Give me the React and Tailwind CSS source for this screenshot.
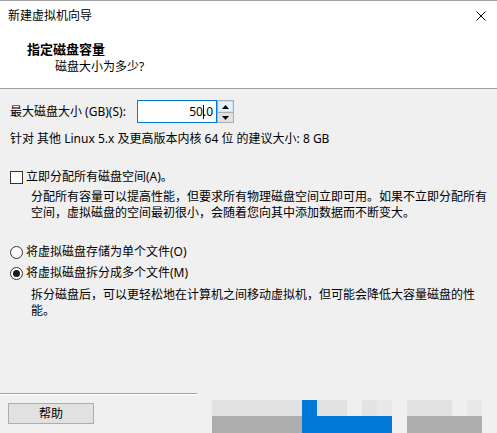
import React from "react";

// pixelated button strip in the lower right of the dialog
const mosaic = [
  { w: 90, top: "#e1e1e1", bottom: "#adadad" },
  { w: 15, top: "#0078d7", bottom: "#0078d7" },
  { w: 30, top: "#e1e1e1", bottom: "#0078d7" },
  { w: 15, top: "#efefef", bottom: "#0078d7" },
  { w: 15, top: "#e3e3e3", bottom: "#0078d7" },
  { w: 15, top: "#e8e8e8", bottom: "#0078d7" },
  { w: 15, top: "#f0f0f0", bottom: "#f0f0f0" },
  { w: 45, top: "#e1e1e1", bottom: "#adadad" },
  { w: 15, top: "#efefef", bottom: "#adadad" },
  { w: 15, top: "#e8e8e8", bottom: "#adadad" },
];

function Checkbox() {
  return <span className="block w-[13px] h-[13px] border border-[#333333] bg-white shrink-0" />;
}

function Radio({ checked }) {
  return (
    <span className="flex items-center justify-center w-[13px] h-[13px] rounded-full border border-[#333333] bg-white shrink-0">
      {checked && <span className="block w-[7px] h-[7px] rounded-full bg-[#1a1a1a]" />}
    </span>
  );
}

export default function App() {
  return (
    <div className="w-[497px] h-[433px] flex flex-col overflow-hidden bg-[#f0f0f0] text-[12px] leading-[16px] text-black font-['Noto_Sans','Noto_Sans_CJK_SC',sans-serif]">
      {/* title bar + header */}
      <div className="bg-white border-t border-[#a0a0a0]">
        <div className="h-[30px] flex items-center justify-between pl-[8px] pr-[10px]">
          <span>新建虚拟机向导</span>
          <svg width="10" height="10" viewBox="0 0 10 10" className="mr-[1px]">
            <path d="M0.5 0.5 L9.5 9.5 M9.5 0.5 L0.5 9.5" stroke="#000" strokeWidth="1" />
          </svg>
        </div>
        <div className="h-[57px] pt-[10px]">
          <div className="pl-[27px] font-bold text-[13px]">指定磁盘容量</div>
          <div className="pl-[55px] mt-[2px]">磁盘大小为多少?</div>
        </div>
      </div>
      <div className="h-px bg-[#a0a0a0]" />

      <div className="flex-1 flex flex-col">
        <div className="pl-[10px] mt-[11px] flex items-center">
          <span className="w-[127px]">最大磁盘大小 (GB)(S):</span>
          <div className="relative w-[80px] h-[23px] border border-[#0078d7] bg-white flex items-center justify-end pr-[3px]">
            <span>50.0</span>
            <span className="absolute left-[65px] top-[4px] w-px h-[14px] bg-black" />
          </div>
          <div className="w-[17px] h-[23px] border border-[#adadad] flex flex-col bg-white">
            <div className="flex-1 flex items-center justify-center bg-[#e5f1fb] border border-[#cce4f7]">
              <svg width="7" height="4" viewBox="0 0 7 4"><path d="M3.5 0 L7 4 L0 4 Z" fill="#000" /></svg>
            </div>
            <div className="flex-1 flex items-center justify-center bg-[#e1e1e1] border-t border-[#adadad]">
              <svg width="7" height="4" viewBox="0 0 7 4"><path d="M0 0 L7 0 L3.5 4 Z" fill="#000" /></svg>
            </div>
          </div>
        </div>
        <div className="pl-[10px] mt-[8px]">针对 其他 Linux 5.x 及更高版本内核 64 位 的建议大小: 8 GB</div>

        <div className="pl-[10px] mt-[22px] flex items-center gap-[3px]">
          <Checkbox />
          <span>立即分配所有磁盘空间(A)。</span>
        </div>
        <div className="pl-[31px] mt-[4px]">
          <div>分配所有容量可以提高性能，但要求所有物理磁盘空间立即可用。如果不立即分配所有</div>
          <div>空间，虚拟磁盘的空间最初很小，会随着您向其中添加数据而不断变大。</div>
        </div>

        <div className="pl-[10px] mt-[23px] flex items-center gap-[3px]">
          <Radio />
          <span>将虚拟磁盘存储为单个文件(O)</span>
        </div>
        <div className="pl-[10px] mt-[5px] flex items-center gap-[3px]">
          <Radio checked />
          <span>将虚拟磁盘拆分成多个文件(M)</span>
        </div>
        <div className="pl-[31px] mt-[6px]">
          <div>拆分磁盘后，可以更轻松地在计算机之间移动虚拟机，但可能会降低大容量磁盘的性</div>
          <div>能。</div>
        </div>

        {/* footer */}
        <div className="mt-auto h-[40px] flex flex-col">
          <div className="w-[197px] h-px bg-[#a0a0a0]" />
          <div className="w-[197px] h-px bg-white" />
          <div className="flex-1 flex items-start">
            <button className="ml-[8px] mt-[8px] w-[86px] h-[21px] bg-[#e1e1e1] border border-[#adadad] flex items-center justify-center leading-[16px]">
              帮助
            </button>
            <div className="ml-[118px] mt-[5px] flex">
              {mosaic.map((c, i) => (
                <div key={i} className="flex flex-col">
                  <div className="h-[16px]" style={{ width: c.w, background: c.top }} />
                  <div className="h-[17px]" style={{ width: c.w, background: c.bottom }} />
                </div>
              ))}
            </div>
          </div>
        </div>
      </div>
    </div>
  );
}
